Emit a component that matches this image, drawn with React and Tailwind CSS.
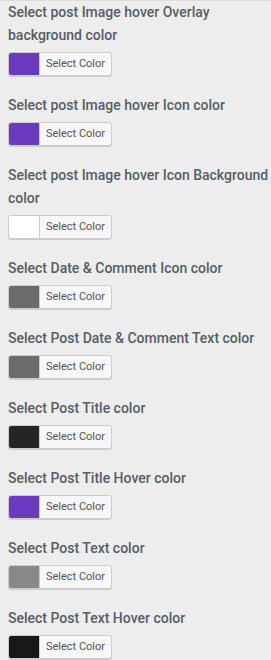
import React from "react";

const items = [
  { label: "Select post Image hover Overlay background color", color: "#6a3bbf" },
  { label: "Select post Image hover Icon color", color: "#6a3bbf" },
  { label: "Select post Image hover Icon Background color", color: "#ffffff" },
  { label: "Select Date & Comment Icon color", color: "#6b6b6b" },
  { label: "Select Post Date & Comment Text color", color: "#6b6b6b" },
  { label: "Select Post Title color", color: "#252525" },
  { label: "Select Post Title Hover color", color: "#6a3bbf" },
  { label: "Select Post Text color", color: "#888888" },
  { label: "Select Post Text Hover color", color: "#181818" },
];

export default function App() {
  return (
    <div className="w-[271px] h-[660px] overflow-hidden bg-[#ededed] border-t border-[#dddddd] font-['Roboto',sans-serif]">
      <div className="pl-2">
        {items.map((it, i) => (
          <div key={i} className="pb-[18px]">
            <div className="text-[14px] leading-[23px] font-medium text-[#555d66]">{it.label}</div>
            <div className="mt-[5px] flex h-[24px] w-[104px] rounded-[3px] border border-[#cccccc] bg-[#f7f7f7] shadow-[0_1px_0_#cccccc] overflow-hidden">
              <div className="w-[31px] h-full border-r border-[#cccccc]" style={{ backgroundColor: it.color }} />
              <div className="flex-1 flex items-center justify-center text-[11px] text-[#555555] font-['Roboto',sans-serif]">Select Color</div>
            </div>
          </div>
        ))}
      </div>
    </div>
  );
}
